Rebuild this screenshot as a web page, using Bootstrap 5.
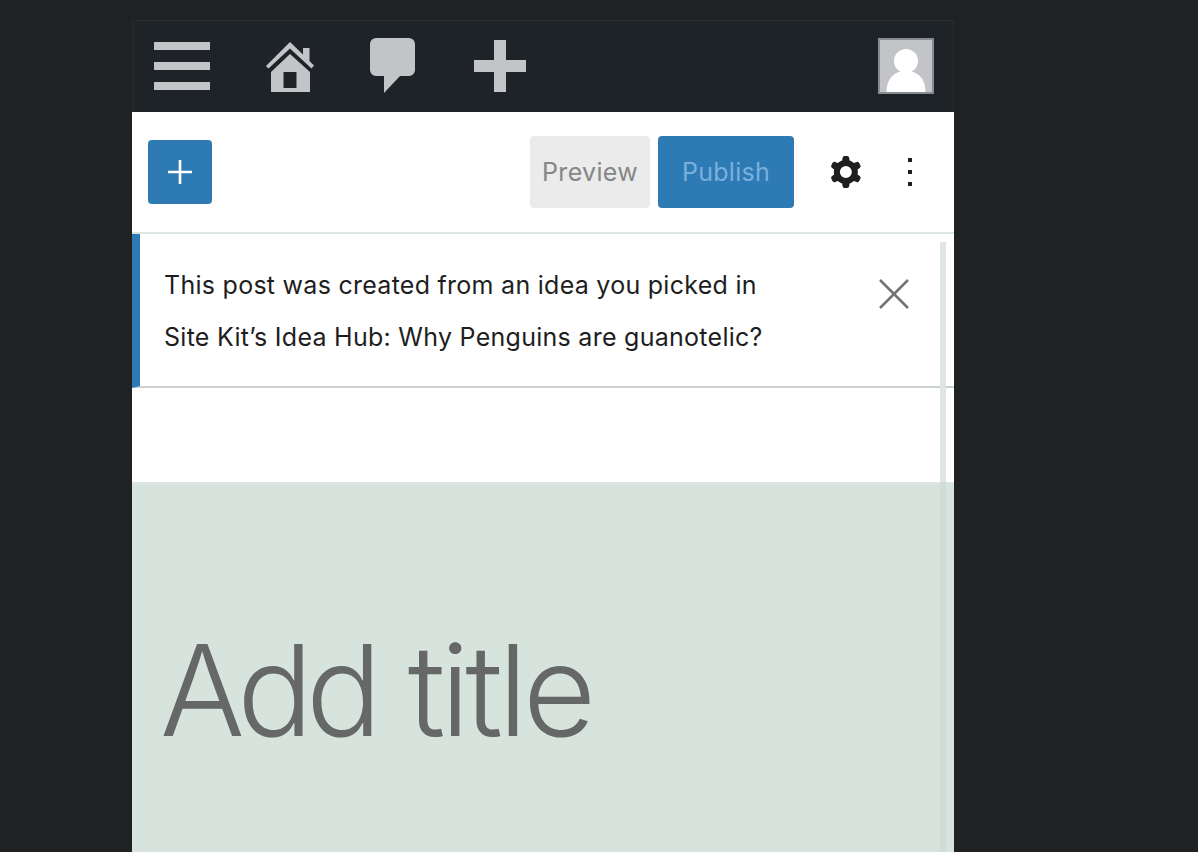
<!DOCTYPE html>
<html lang="en">
<head>
<meta charset="utf-8">
<title>Editor</title>
<link rel="stylesheet" href="https://cdn.jsdelivr.net/npm/bootstrap@5.3.0/dist/css/bootstrap.min.css">
<style>
html,body{height:852px;overflow:hidden}
body{background:#202123;font-family:Inter,"Liberation Sans",sans-serif}
.phone{width:822px;height:832px;margin:20px 0 0 132px;position:relative;overflow:hidden;background:#fff}
.adminbar{height:92px;background:#1d2327;padding:0 20px 0 22px;box-shadow:inset 0 1px 0 #272c30,inset 1px 0 0 #272c30,inset -1px 0 0 #272c30}
.adminbar svg{display:block;fill:#c3c4c7}
.ab-menu{width:56px;height:48px;margin-right:56px}
.ab-home{width:48px;height:50px;margin-right:56px;margin-top:2px}
.ab-comment{width:45px;height:55px;margin-right:59px;margin-bottom:1px}
.ab-new{width:52px;height:52px}
.avatar{width:56px;height:56px;background:#c3c4c7;border:2px solid #8a8c8f;overflow:hidden}
.edtools{height:122px;background:#fff;border-bottom:2px solid #dce6e1;padding:0 20px 0 16px}
.inserter{width:64px;height:64px;background:#2e7ab4;border-radius:4px;border:0;padding:0;display:flex;align-items:center;justify-content:center}
.act{height:72px;border-radius:4px;border:0;padding:2px 0 0;font-size:25px;font-weight:400;letter-spacing:.3px;display:flex;align-items:center;justify-content:center}
.act-preview{width:120px;background:#ebebeb;color:#858787}
.act-publish{width:136px;background:#2e7ab4;color:#7ab0dc;margin-left:8px}
.gear{margin-left:28px;width:48px;height:48px;display:block}
.kebab{margin-left:16px;width:48px;height:48px;display:block}
.notice{height:154px;border-left:8px solid #2e7ab4;border-bottom:2px solid #cdd0cf;padding:25px 0 0 24px;font-size:25px;line-height:52px;color:#1e1e1e;letter-spacing:.27px}
.notice p{margin:0}
.notice-x{position:absolute;right:44px;top:258px;width:32px;height:32px}
.blank{height:94px;background:#fff}
.titlearea{height:370px;background:#d7e3dd;border-top:2px solid #dce6e1;padding:143px 0 0 28px}
.titlearea h1{margin:0;font-family:Inter,"Liberation Sans",sans-serif;font-weight:300;font-size:126px;line-height:1;color:#656866;letter-spacing:-4.7px;word-spacing:2px}
.title-first{letter-spacing:-7px}
.track{position:absolute;left:808px;top:222px;bottom:0;width:6px;background:linear-gradient(#dfe6e2 240px,#d1dcd6 240px)}
</style>
</head>
<body>
<div class="phone">
  <div class="adminbar d-flex align-items-center">
    <svg class="ab-menu" viewBox="0 0 56 48" aria-label="Menu"><rect y="0" width="56" height="8"/><rect y="20" width="56" height="8"/><rect y="40" width="56" height="8"/></svg>
    <svg class="ab-home" viewBox="0 0 48 50" aria-label="Home"><path fill-rule="evenodd" d="M24 12 44 30v20H5V30ZM17.500 30v16h13V30Z"/><path d="M24 0 37 12.500V6h6.500v13L48 23.500 45.500 26.500 24 6.500 2.500 26.500 0 24Z"/></svg>
    <svg class="ab-comment" viewBox="0 0 45 55" aria-label="Comments"><path d="M6 0h33a6 6 0 0 1 6 6v26a6 6 0 0 1-6 6H30L14 55V38H6a6 6 0 0 1-6-6V6a6 6 0 0 1 6-6Z"/></svg>
    <svg class="ab-new" viewBox="0 0 52 52" aria-label="New"><path d="M20 0h12v20h20v12H32v20H20V32H0V20h20Z"/></svg>
    <div class="ms-auto avatar">
      <svg viewBox="0 0 52 52" width="52" height="52" aria-label="Avatar"><circle cx="26" cy="21" r="12" fill="#fff"/><path fill="#fff" d="M6.500 52c0-14 8-21 19.500-21s19.500 7 19.500 21Z"/></svg>
    </div>
  </div>
  <div class="edtools d-flex align-items-center">
    <button class="inserter" type="button" aria-label="Add block"><svg width="24" height="24" viewBox="0 0 24 24"><path stroke="#fff" stroke-width="2.600" d="M12 0v24M0 12h24"/></svg></button>
    <button class="act act-preview ms-auto" type="button">Preview</button>
    <button class="act act-publish" type="button">Publish</button>
    <svg class="gear" viewBox="0 0 24 24" aria-label="Settings"><path fill="#1e1e1e" fill-rule="evenodd" d="M10.289 4.836A1 1 0 0 1 11.275 4h1.306a1 1 0 0 1 .987.836l.244 1.466c.787.26 1.503.679 2.108 1.218l1.393-.522a1 1 0 0 1 1.216.437l.653 1.13a1 1 0 0 1-.23 1.273l-1.148.944a6.025 6.025 0 0 1 0 2.435l1.149.946a1 1 0 0 1 .23 1.272l-.653 1.13a1 1 0 0 1-1.216.437l-1.394-.522c-.605.54-1.32.958-2.108 1.218l-.244 1.466a1 1 0 0 1-.987.836h-1.306a1 1 0 0 1-.986-.836l-.244-1.466a5.995 5.995 0 0 1-2.108-1.218l-1.394.522a1 1 0 0 1-1.217-.436l-.653-1.131a1 1 0 0 1 .23-1.272l1.149-.946a6.026 6.026 0 0 1 0-2.435l-1.148-.944a1 1 0 0 1-.23-1.272l.653-1.131a1 1 0 0 1 1.216-.437l1.393.522a5.994 5.994 0 0 1 2.108-1.218l.244-1.466ZM14.929 12a3 3 0 1 1-6 0 3 3 0 0 1 6 0Z"/></svg>
    <svg class="kebab" viewBox="0 0 24 24" aria-label="Options"><path fill="#1e1e1e" d="M13 19h-2v-2h2v2zm0-6h-2v-2h2v2zm0-6h-2V5h2v2z"/></svg>
  </div>
  <div class="notice">
    <p>This post was created from an idea you picked in</p>
    <p>Site Kit’s Idea Hub: Why Penguins are guanotelic?</p>
  </div>
  <svg class="notice-x" viewBox="0 0 32 32" aria-label="Dismiss"><path stroke="#717473" stroke-width="2.600" d="M2 2l28 28M30 2 2 30"/></svg>
  <div class="blank"></div>
  <div class="titlearea"><h1><span class="title-first">Add</span> title</h1></div>
  <div class="track"></div>
</div>
<script src="https://cdn.jsdelivr.net/npm/bootstrap@5.3.0/dist/js/bootstrap.bundle.min.js"></script>
</body>
</html>
